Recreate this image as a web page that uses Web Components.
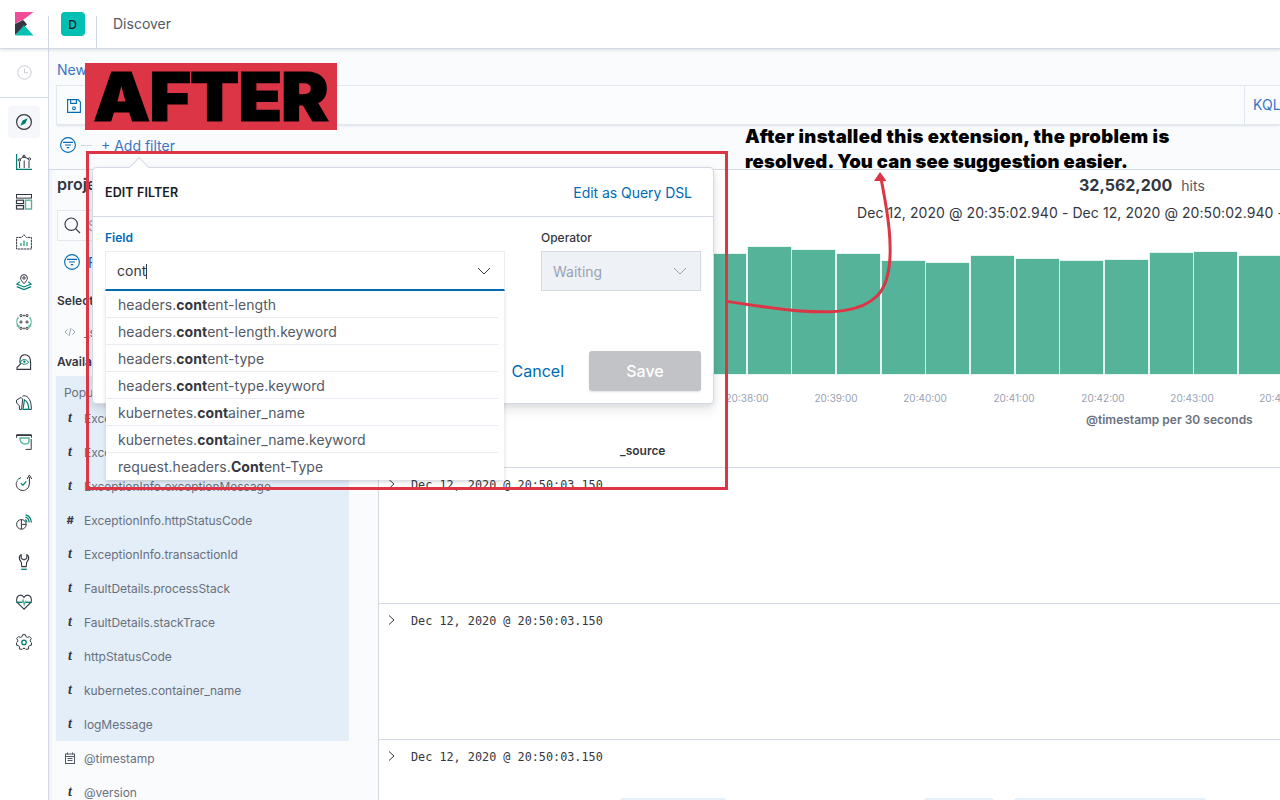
<!DOCTYPE html>
<html lang="en"><head><meta charset="utf-8"><title>Discover</title>
<style>
html,body{margin:0;padding:0;width:1280px;height:800px;overflow:hidden;background:#fff;font-family:Inter,"Liberation Sans",sans-serif;color:#343741}
</style></head>
<body>
<kb-app>
  <kb-header slot="header"></kb-header>
  <kb-nav slot="nav"></kb-nav>
  <kb-discover slot="main"></kb-discover>
  <kb-popover slot="overlay"></kb-popover>
  <kb-annotations slot="overlay"></kb-annotations>
</kb-app>
<script>
const D='#343741',T='#017d73',L='#54b399';
const ICONS={
 clock:`<circle cx="8" cy="8" r="7.2" stroke="#c4c8cf"/><path d="M8 3.8V8.3H11.6" stroke="#c4c8cf"/>`,
 discover:`<circle cx="8" cy="8" r="7.4" stroke="${D}" stroke-width="1.2"/><path d="M11.6 4.2 9.4 9.4 4.4 11.8 6.6 6.6Z" fill="${T}"/>`,
 visualize:`<path d="M.6 0V15.4H16" stroke="${T}" stroke-width="1.2"/><path d="M3.6 14V7.8M8.2 14V6.5M13 14V7" stroke="${D}"/><path d="M3.6 5.8 7.4 2.6 12.4 4.8" stroke="${D}"/><circle cx="3.4" cy="6" r="1.2" stroke="${D}"/><circle cx="8" cy="2.4" r="1.2" stroke="${D}"/><circle cx="13.4" cy="5" r="1.2" stroke="${D}"/>`,
 dashboard:`<rect x=".5" y=".5" width="15" height="3.6" stroke="${D}"/><rect x=".5" y="6.2" width="7" height="3.4" stroke="${D}" stroke-width="1.2"/><rect x=".5" y="11.6" width="7" height="3.4" stroke="${D}" stroke-width="1.2"/><rect x="9.5" y="6.2" width="6" height="8.8" stroke="${L}" stroke-width="1.4"/>`,
 canvas:`<path d="M5.6 3.4 8 .8l2.4 2.6H15.4V15H.6V3.4Z" stroke="${D}" stroke-dasharray="2.4 .5"/><path d="M5 12V9M8 12V6.5M11 12V8" stroke="${L}" stroke-width="1.6"/>`,
 maps:`<path d="M8 9.6C6 7.4 4.6 5.8 4.6 4A3.4 3.4 0 0 1 11.4 4C11.4 5.8 10 7.4 8 9.6Z" stroke="${D}"/><circle cx="8" cy="4" r="1.2" stroke="${D}"/><path d="M4 7.6.8 10 8 13 15.2 10 12 7.6" stroke="${T}" stroke-width="1.1"/><path d="M.8 12.6 8 15.6 15.2 12.6" stroke="${T}" stroke-width="1.2"/>`,
 ml:`<g fill="none" stroke="${D}"><circle cx="5" cy="1.6" r="1.1"/><circle cx="11" cy="1.6" r="1.1"/><circle cx="5" cy="8" r="1.1"/><circle cx="11" cy="8" r="1.1"/><circle cx="5" cy="14.4" r="1.1"/><circle cx="11" cy="14.4" r="1.1"/><circle cx="8" cy="1.6" r=".6"/><circle cx="8" cy="14.4" r=".6"/></g><path d="M2.4 3.2C.4 5.6.4 9.6 2.4 12.6M.8 12H3V14M13.6 3.2C15.6 5.6 15.6 9.6 13.6 12.6M15.2 12H13V14" stroke="${L}" stroke-width="1.3"/>`,
 graph:`<path d="M1 15.4V13.6L4.4 10.2C3.2 6 4.2 .8 8.6 .8 13 .8 14.6 4.6 14.6 8.4V15.4Z" stroke="${D}" stroke-width="1.1"/><path d="M4.2 8.4C6.4 4.6 10 4.6 12.8 8.4 10 10.8 6.6 10.8 4.2 8.4Z" stroke="${T}"/><circle cx="8.4" cy="7.6" r="1.2" fill="${T}"/>`,
 apm:`<path d="M.6 6 5 3.4 6.6 5 5.6 15.4 3.4 15.4 3.4 11.6.6 9.2Z" stroke="${D}"/><path d="M6.4 2.2C10 .4 15.4 3.6 15.4 15.4H9.2" stroke="${D}"/><path d="M8.4 5.8C11 7 12.6 10.6 12.8 15.4H7Z" stroke="${T}" stroke-width="1.2"/>`,
 uptime:`<path d="M.6 3.8V.7H15.4V3.8M.6 1.5H15.4" stroke="${D}"/><path d="M4 4H13V7.4C13 9.6 10 10.6 7 9.6 5.2 8.8 4 6.4 4 4Z" stroke="${L}" stroke-width="1.4"/><path d="M15.2 5V15.4H9.6" stroke="${D}"/>`,
 check:`<path d="M13.4 3V10A6.6 6.6 0 1 1 5 3.6" stroke="${D}" stroke-dasharray="14 .1"/><path d="M11 5 13.4 1 15.8 5" stroke="${D}"/><path d="M4.8 9.2 7 11.2 10.4 7.4" stroke="${T}" stroke-width="1.2"/><path d="M.9 8.5A6.6 6.6 0 0 1 3 5" stroke="#fff" stroke-width="1.4"/><path d="M1 8C1.4 6.4 2.2 5.4 3 4.8" stroke="${L}" stroke-width="1.2" stroke-dasharray="1.6 1"/>`,
 signal:`<path d="M9.6 .8C13 1.6 15.2 4.8 15.4 8.6M9.4 3.2C11.6 3.8 13 5.8 13.2 8.4M9 5.6C10.2 6 11 7 11 8.4" stroke="${T}" stroke-width="1.2"/><circle cx="5.4" cy="10.4" r="4.8" stroke="${D}"/><path d="M5.4 5.6V10.4H10.2M5.4 10.4V15.2" stroke="${D}"/>`,
 wrench:`<path d="M5.2 .8C3.6 1.6 3 3.2 3.4 5 3.8 6.6 5.2 7.4 5.4 8.8L5.8 12.6H10.2L10.6 8.8C10.8 7.4 12.2 6.6 12.6 5 13 3.2 12.4 1.6 10.8 .8V4.4L8 5.8 5.2 4.4Z" stroke="${D}" stroke-width="1.1"/><path d="M5.2 15.3H10.8" stroke="${T}" stroke-width="1.3"/>`,
 heart:`<path d="M8 15.2 1.6 8.8C-.4 6.6.6 1.6 4.2 1.2 6 1 7.2 2 8 3.4 8.8 2 10 1 11.8 1.2 15.4 1.6 16.4 6.6 14.4 8.8Z" stroke="${D}" stroke-width="1.1"/><path d="M0 8.4H6L7 6.2 8.2 10.6 9.4 7.4 10 8.4H16" stroke="${L}" stroke-width="1.3"/><path d="M.2 8.4H6M10 8.4H15.8" stroke="${T}" stroke-width="1.3"/>`,
 gear:`<path d="M6.6.7H9.4L9.9 2.6 11.6 3.4 13.4 2.5 15.3 4.6 14.2 6.2 14.7 8 15.6 8.9 15.3 11.3 13.6 11.5 12.4 13 12.6 15 9.9 15.4 8.9 14.4H7.1L6.1 15.4 3.4 15 3.6 13 2.4 11.5.7 11.3.4 8.9 1.3 8 1.8 6.2.7 4.6 2.6 2.5 4.4 3.4 6.1 2.6Z" stroke="${D}" stroke-width="1"/><circle cx="8" cy="8.4" r="2.2" stroke="${T}" stroke-width="1.3"/>`
};
function def(name,css,html,setup){
  customElements.define(name,class extends HTMLElement{
    connectedCallback(){
      if(this.shadowRoot)return;
      const r=this.attachShadow({mode:'open'});
      r.innerHTML=`<style>${css}</style>`+(typeof html==='function'?html(this):html);
      if(setup)setup(r,this);
    }
  });
}
def('kb-app',`:host{display:grid;grid-template:49px 1fr / 49px 1fr;width:1280px;height:800px;position:relative;overflow:hidden}
  .h{grid-column:1/3}.n,.m{min-width:0;min-height:0;overflow:hidden}`,
  `<div class="h"><slot name="header"></slot></div><div class="n"><slot name="nav"></slot></div><div class="m"><slot name="main"></slot></div><slot name="overlay"></slot>`);
def('kb-icon',`:host{display:inline-flex;line-height:0}svg{display:block;fill:none}`,
  h=>`<svg viewBox="0 0 16 16" width="${h.getAttribute('size')||18}" height="${h.getAttribute('size')||18}" style="overflow:visible">${ICONS[h.getAttribute('name')]}</svg>`);
def('kb-header',`:host{display:flex;height:49px;box-sizing:border-box;background:#fff;border-bottom:1px solid #d3dae6;box-shadow:0 1px 3px rgba(152,162,179,.35);position:relative;z-index:2}
  .cell{display:flex;align-items:center;justify-content:center;height:32px;margin-top:16px;width:48px;box-sizing:content-box;border-right:1px solid #d3dae6}
  .cell.logo{width:48px}.logoWrap{margin-top:-16px;display:flex;align-items:center;justify-content:center;width:100%;height:48px}
  .cell.sp{width:47px}
  .av{margin-top:-16px;width:24px;height:24px;border-radius:4px;background:#00bfb3;color:#1a1c21;font-size:12px;font-weight:500;display:flex;align-items:center;justify-content:center}
  .t{font-size:14px;color:#535966;line-height:48px;padding-left:16px}`,
  `<div class="cell logo"><div class="logoWrap"><svg width="19" height="24" viewBox="0 0 19 24"><path d="M0 0H18.5L8 8C5 9 2 10.5 0 12Z" fill="#f04e98"/><path d="M0 12 8 8C10 10 11 11.2 12 12.6L0 23Z" fill="#343741"/><path d="M0 23.4 9 13.2 18.5 23.4Z" fill="#00bfb3"/></svg></div></div>
   <div class="cell sp"><div class="av">D</div></div><div class="t">Discover</div>`);
def('kb-nav',`:host{display:flex;flex-direction:column;align-items:center;width:49px;height:751px;box-sizing:border-box;background:#fff;border-right:1px solid #d3dae6}
  .recent{height:46px;padding-bottom:2px;width:100%;flex:none;display:flex;align-items:center;justify-content:center;border-bottom:1px solid #d3dae6;box-sizing:content-box}
  .list{display:flex;flex-direction:column;gap:8px;padding-top:8px}
  .it{width:32px;height:32px;display:flex;align-items:center;justify-content:center;border-radius:4px}
  .it.on{background:#f5f7fa}`,
  ()=>`<div class="recent"><kb-icon name="clock" size="15"></kb-icon></div><div class="list">`+
   ['discover','visualize','dashboard','canvas','maps','ml','graph','apm','uptime','check','signal','wrench','heart','gear'].map((n,i)=>`<div class="it ${i?'':'on'}"><kb-icon name="${n}" size="16"></kb-icon></div>`).join('')+`</div>`);
def('kb-field',`:host{display:flex;align-items:center;height:34px;font-size:12px;letter-spacing:-.03px;color:#69707d;white-space:nowrap}
  .ty{width:28px;flex:none;display:flex;justify-content:center;font:italic 700 14px "Liberation Serif",serif;color:#343741}
  .ty.h{font:italic 700 11px Inter,sans-serif}`,
  h=>{const t=h.getAttribute('type');let g=t==='d'?`<svg width="12" height="12" viewBox="0 0 12 12" fill="none" stroke="#535966"><rect x="1.5" y="2" width="9" height="9.5"/><path d="M1.5 4.5H10.5M3.5 .5V2.5M8.5 .5V2.5M3.5 6.5H8.5M3.5 8.5H8.5" /></svg>`:t==='c'?`<svg width="12" height="12" viewBox="0 0 12 12" fill="none" stroke="#98a2b3"><path d="M3.6 3.4 1 6 3.6 8.6M8.4 3.4 11 6 8.4 8.6M7 2 5 10"/></svg>`:t;
   return `<span class="ty ${t==='#'?'h':''}">${g}</span><span>${h.getAttribute('name')}</span>`});
def('kb-sidebar',`:host{display:block;width:329px;box-sizing:border-box;height:630px;overflow:hidden;padding-left:7px;flex:none;background:#fafbfd;box-shadow:inset 4px 0 4px -3px rgba(152,162,179,.2)}
  .title{height:29px;line-height:29px;font-size:16px;font-weight:600;margin-bottom:11px;padding-left:1px}
  .search{height:31px;width:321px;box-sizing:border-box;border:1px solid #e3e7ef;border-right:0;background:#fbfcfd;display:flex;align-items:center;padding-left:6px;gap:7px;font-size:14px;color:#98a2b3;margin-left:1px}
  .fil{height:40px;display:flex;align-items:center;padding-left:8px;gap:8px;color:#006bb4;font-size:14px;margin-top:1px}
  h4{margin:0;font-size:12px;font-weight:600;color:#343741;padding-left:1px;line-height:16px}
  .h1{padding-top:11px;height:25px}.h2{padding-top:8px;height:22px}
  .src{height:28px}.src kb-field{height:28px}
  .panel{width:293px;background:#e3eef8;height:365px}
  .pop{padding:8px 0 0 8px;height:17px;font-size:12px;color:#69707d;line-height:18px}`,
  ()=>`<div class="title">project-*</div>
   <div class="search"><svg width="17" height="17" viewBox="0 0 17 17" fill="none" stroke="#343741" stroke-width="1.1"><circle cx="7.2" cy="7.2" r="6.2"/><path d="M11.8 11.8 16 16"/></svg><span>Search field names</span></div>
   <div class="fil"><kb-filter-ico></kb-filter-ico><span>Filter by type</span></div>
   <div class="h1"><h4>Selected fields</h4></div>
   <div class="src"><kb-field type="c" name="_source"></kb-field></div>
   <div class="h2"><h4>Available fields</h4></div>
   <div class="panel"><div class="pop">Popular</div>`+
   [['t','ExceptionInfo.exceptionClass'],['t','ExceptionInfo.exceptionCode'],['t','ExceptionInfo.exceptionMessage'],['#','ExceptionInfo.httpStatusCode'],['t','ExceptionInfo.transactionId'],['t','FaultDetails.processStack'],['t','FaultDetails.stackTrace'],['t','httpStatusCode'],['t','kubernetes.container_name'],['t','logMessage']].map(a=>`<kb-field type="${a[0]}" name="${a[1]}"></kb-field>`).join('')+
   `</div><kb-field type="d" name="@timestamp"></kb-field><kb-field type="t" name="@version"></kb-field>`);
def('kb-filter-ico',`:host{display:inline-flex;line-height:0}`,
  `<svg width="16" height="16" viewBox="0 0 16 16" fill="none" stroke="#006bb4" stroke-width="1.1"><circle cx="8" cy="8" r="7.4"/><path d="M3 5.4H13M5 8H11M6.8 10.6H9.2"/></svg>`);
def('kb-histogram',`:host{display:block;white-space:nowrap}
  .bars{display:flex;align-items:flex-end;height:148px;margin-left:324px}
  .b{flex:none;width:43px;margin-right:1.67px;background:#54b399;box-shadow:0 0 0 .5px #cfe8df}
  .ax{display:flex;margin-left:323.5px;height:36px;padding-top:16px;box-sizing:border-box}
  .ax span{flex:none;width:89px;text-align:center;font-size:10px;line-height:16px;color:#98a2b3}
  .ti{height:20px;line-height:20px;font-size:12px;font-weight:600;color:#6a717d;padding-left:707px}`,
  ()=>`<div class="bars">`+[254,247,250,254,261,263,256,259,261,260,253,252,256].map(t=>`<div class="b" style="height:${374-t}px"></div>`).join('')+`</div>
   <div class="ax">`+['20:38:00','20:39:00','20:40:00','20:41:00','20:42:00','20:43:00','20:44:00'].map(s=>`<span>${s}</span>`).join('')+`</div>
   <div class="ti">@timestamp per 30 seconds</div>`);
def('kb-doc-row',`:host{display:block;height:136px;box-sizing:border-box;border-bottom:1px solid #d3dae6;padding-top:9px;white-space:nowrap;overflow:hidden}
  .l{display:flex;height:16px;align-items:center}
  svg{margin-left:9px;width:7px;height:12px;flex:none;margin-top:-3px}
  .d{font:11.8px/16px "DejaVu Sans Mono",monospace;margin-left:16px;color:#343741}
  .p{display:flex;padding-left:241px;margin-top:33px}
  .p i{display:block;height:16px;background:#e6f0f8;border-radius:3px;flex:none}`,
  h=>`<div class="l"><svg viewBox="0 0 7 12" fill="none" stroke="#343741"><path d="M1 1.5 6 6 1 10.5"/></svg><span class="d">Dec 12, 2020 @ 20:50:03.150</span></div>`+
   (h.hasAttribute('pills')?`<div class="p"><i style="width:106px"></i><i style="width:70px;margin-left:198px"></i><i style="width:192px;margin-left:20px"></i></div>`:''));
def('kb-results',`:host{display:block;flex:1;min-width:0;background:#fff;border-left:1px solid #d3dae6;overflow:hidden;white-space:nowrap}
  .hits{height:30px;line-height:30px;padding-left:700px;font-size:14px;color:#535966}
  .hits b{font-size:16px;font-weight:700;color:#343741;margin-right:5px}
  .date{height:26px;line-height:26px;padding-left:478px;font-size:14px;letter-spacing:.07px;color:#343741}
  .th{height:38px;box-sizing:border-box;border-bottom:1px solid #d3dae6;padding:12px 0 0 241px;font-size:12px;font-weight:600;line-height:18px;color:#343741}`,
  `<div class="hits"><b>32,562,200</b> hits</div>
   <div class="date">Dec 12, 2020 @ 20:35:02.940 - Dec 12, 2020 @ 20:50:02.940 - Auto</div>
   <kb-histogram></kb-histogram><div class="th">_source</div>
   <kb-doc-row></kb-doc-row><kb-doc-row></kb-doc-row><kb-doc-row pills></kb-doc-row>`);
def('kb-discover',`:host{display:block;height:751px;background:#fafbfd;overflow:hidden}
  .new{height:36px;padding-left:8px;line-height:41px;font-size:14px;color:#3a75c4}
  .q{margin-left:7px;height:40px;box-sizing:border-box;border:1px solid #e3e7ef;border-right:0;background:#fbfcfd;box-shadow:0 2px 2px -1px rgba(152,162,179,.3);display:flex;align-items:center;justify-content:space-between;padding-left:10px}
  .q svg{margin-top:2px}
  .kql{height:100%;border-left:1px solid #e3e7ef;box-sizing:border-box;width:36px;padding-left:8px;line-height:38px;font-size:14px;color:#3a75c4;overflow:hidden}
  .f{height:45px;display:flex;align-items:center;border-bottom:1px solid #d3dae6;box-sizing:border-box;padding:0 0 4px 11px;font-size:14px;color:#3a75c4}
  .f i{display:block;width:11px;height:1px;background:#d3dae6;margin:0 9px 0 5px}
  .grid{display:flex}`,
  `<div class="new">New</div>
   <div class="q"><svg width="14" height="14" viewBox="0 0 14 14" fill="none" stroke="#006bb4" stroke-width="1.1"><path d="M.6.6H11L13.4 3V13.4H.6Z"/><path d="M3.6.8V4.4H9.4V.8"/><circle cx="7" cy="9.2" r="1.4"/></svg><div class="kql">KQL</div></div>
   <div class="f"><kb-filter-ico></kb-filter-ico><i></i><span>+ Add filter</span></div>
   <div class="grid"><kb-sidebar></kb-sidebar><kb-results></kb-results></div>`);
def('kb-combo',`:host{display:block;position:relative}
  .box{height:40px;box-sizing:border-box;display:flex;align-items:center;justify-content:space-between;padding:0 12px 0 11px;font-size:14px;border:1px solid #e9edf3;background:#fff;color:#343741}
  :host([focus]) .box{border-bottom:2px solid #006bb4}
  :host([disabled]) .box{background:#eef2f7;border-color:#d3dae6;color:#98a2b3}
  .caret{display:inline-block;width:1px;height:15px;background:#343741;vertical-align:-3px}
  svg{flex:none;margin-right:1px}`,
  h=>{const dis=h.hasAttribute('disabled');return `<div class="box"><span>${h.getAttribute('value')}${h.hasAttribute('focus')?'<span class="caret"></span>':''}</span><svg width="14" height="8" viewBox="0 0 14 8" fill="none" stroke="${dis?'#98a2b3':'#343741'}"><path d="M1 1 7 7 13 1"/></svg></div><slot></slot>`});
def('kb-suggest',`:host{display:block;position:absolute;left:1px;top:40px;width:398px;background:#fff;box-shadow:0 2px 4px rgba(52,55,65,.2);z-index:3}
  .i{height:27px;box-sizing:border-box;margin-right:6px;padding-left:12px;line-height:27px;font-size:14px;letter-spacing:.05px;color:#535966;border-bottom:1px solid #e9edf3;white-space:nowrap}
  .i:last-child{border-bottom:0}
  b{font-weight:700;color:#343741}`,
  ()=>[['headers.','cont','ent-length'],['headers.','cont','ent-length.keyword'],['headers.','cont','ent-type'],['headers.','cont','ent-type.keyword'],['kubernetes.','cont','ainer_name'],['kubernetes.','cont','ainer_name.keyword'],['request.headers.','Cont','ent-Type']].map(a=>`<div class="i">${a[0]}<b>${a[1]}</b>${a[2]}</div>`).join(''));
def('kb-popover',`:host{display:block;position:absolute;left:92px;top:167px;width:622px;height:237px;box-sizing:border-box;background:#fff;border:1px solid #d3dae6;border-radius:4px;box-shadow:0 2px 4px rgba(52,55,65,.08),0 6px 12px rgba(52,55,65,.12);z-index:5;color:#343741}
  .ar{position:absolute;left:39px;top:-8px;width:14px;height:14px;background:#fff;border:1px solid #d3dae6;border-right:0;border-bottom:0;transform:rotate(45deg);box-sizing:border-box}
  .hd{height:48px;border-bottom:1px solid #d3dae6;display:flex;align-items:center;justify-content:space-between;padding:0 21px 0 12px;position:relative}
  .hd b{font-size:12.5px;font-weight:600;color:#1a1c21;letter-spacing:.1px}
  .hd a{font-size:14px;letter-spacing:-.05px;color:#006bb4}
  .form{display:flex;padding:12px 12px 0}
  .c1{width:400px}.c2{width:160px;margin-left:36px}
  label{display:block;font-size:12px;font-weight:600;line-height:18px;margin-bottom:4px}
  .c1 label{color:#006bb4}.c2 label{color:#343741;font-weight:500}
  .ft{display:flex;justify-content:flex-end;align-items:center;gap:25px;padding:60px 12px 0 0}
  .ft a{color:#006bb4;font-size:16px}
  .ft button{all:unset;width:112px;height:40px;background:#c2c3c6;border-radius:3px;text-align:center;color:#fff;font-size:16px;font-weight:500;box-shadow:0 1px 2px rgba(52,55,65,.15)}`,
  `<div class="ar"></div><div class="hd"><b>EDIT FILTER</b><a>Edit as Query DSL</a></div>
   <div class="form"><div class="c1"><label>Field</label><kb-combo value="cont" focus><kb-suggest></kb-suggest></kb-combo></div>
   <div class="c2"><label>Operator</label><kb-combo value="Waiting" disabled></kb-combo></div></div>
   <div class="ft"><a>Cancel</a><button>Save</button></div>`);
def('kb-annotations',`:host{display:block;position:absolute;inset:0;z-index:6;pointer-events:none}
  .ban{position:absolute;left:85px;top:63px;width:252px;height:67px;background:#dc3545;color:#000;display:flex;align-items:center;justify-content:center}
  .ban span{font-family:Inter,sans-serif;font-weight:900;font-size:67px;line-height:66px;letter-spacing:-1px;transform:scaleX(1.07);-webkit-text-stroke:1.2px #000}
  .box{position:absolute;left:86px;top:151px;width:642px;height:339px;box-sizing:border-box;border:3px solid #dc3545}
  .txt{position:absolute;left:745px;top:124px;font-family:Inter,sans-serif;font-weight:900;font-size:18.5px;line-height:25px;color:#000;white-space:nowrap}
  .a{letter-spacing:.33px}.c{letter-spacing:.13px}
  svg{position:absolute;left:0;top:0}`,
  `<div class="ban"><span>AFTER</span></div><div class="box"></div>
   <div class="txt"><span class="a">After installed this extension, the problem is</span><br><span class="c">resolved. You can see suggestion easier.</span></div>
   <svg width="1280" height="800" fill="none"><path d="M728 301.5C750 305 775 309 800 311 830 313 860 313 877 296 890 283 892 258 889 228 887 208 884 195 881 178" stroke="#dc3545" stroke-width="3"/><path d="M880 172 886.5 181 874 181Z" fill="#dc3545"/></svg>`);
</script>
</body></html>
